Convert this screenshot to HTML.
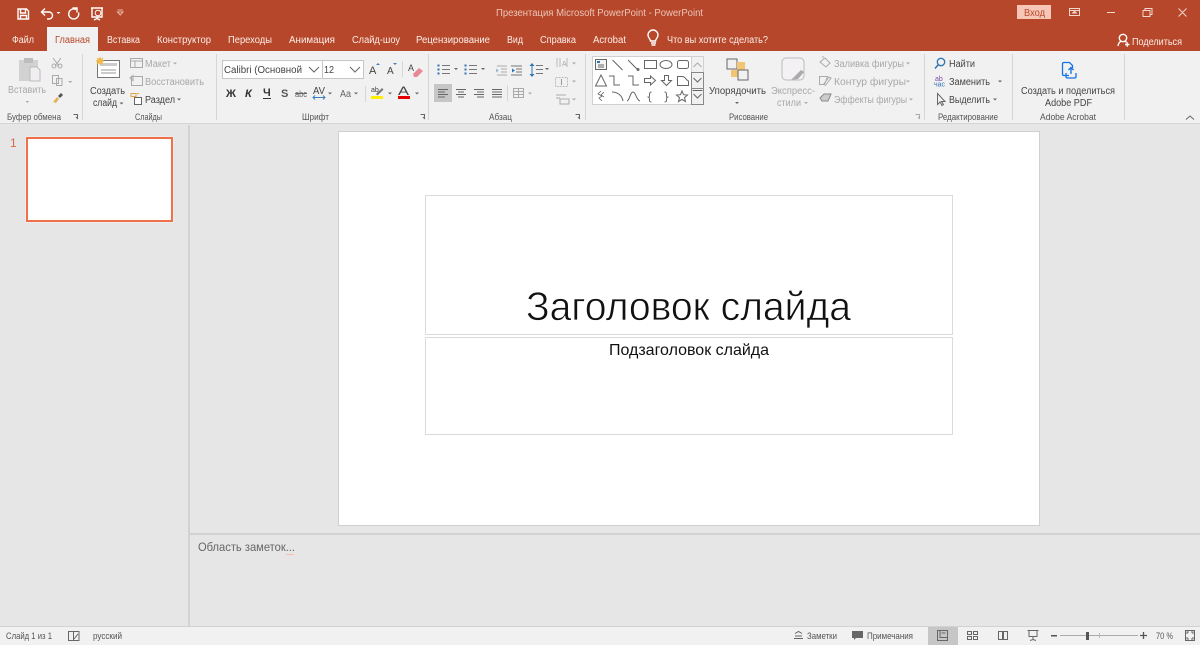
<!DOCTYPE html>
<html lang="ru">
<head>
<meta charset="utf-8">
<title>Презентация Microsoft PowerPoint - PowerPoint</title>
<style>
html,body{margin:0;padding:0;width:1200px;height:645px;overflow:hidden;background:#e6e6e6}
svg{display:block;filter:blur(.3px)}
text{font-family:"Liberation Sans",sans-serif;font-size:10px;fill:#444}
.t{fill:#fbeee9}
.d{fill:#a8a8a8}
.s{font-size:9.5px;fill:#555}
.g{fill:none;stroke:#666;stroke-width:1}
.gd{fill:none;stroke:#aaa;stroke-width:1}
.w{fill:none;stroke:#fff;stroke-width:1.4}
.a{fill:#666}
.ad{fill:#aaa}
</style>
</head>
<body>
<svg width="1200" height="645" viewBox="0 0 1200 645" xmlns="http://www.w3.org/2000/svg">
<rect width="1200" height="645" fill="#e6e6e6"/>
<!-- title bar -->
<rect width="1200" height="51" fill="#b7472a"/>
<rect x="47" y="27" width="51" height="25" fill="#f1f1f1"/>
<!-- QAT -->
<path class="w" d="M18 9h8.500l2 2v8h-10.500zM20.500 9v4h5V9M20.500 19v-3.500h6V19" stroke-width="1.300"/>
<path class="w" d="M42 12h7a3.500 3.500 0 0 1 0 7h-2M45 8.500l-3.500 3.500 3.500 3.500" stroke-width="1.700"/>
<path fill="#fff" d="M56.500 12h4l-2 2z"/>
<path class="w" d="M76 9.500a5 5 0 1 0 2.500 3M72.500 8h4.500v4.500" stroke-width="1.700"/>
<path class="w" d="M91 8h12M92 8v9h10V8M97 17v2M94 20l3-1.500 3 1.500" stroke-width="1"/>
<circle cx="98" cy="13" r="2.800" fill="none" stroke="#fff" stroke-width="1"/>
<path fill="none" stroke="#e7b9aa" d="M117.500 12h5.500l-2.700 3zM117.500 10h5.500"/>
<text x="496" y="16" textLength="207" lengthAdjust="spacingAndGlyphs" style="fill:#eac6ba">Презентация Microsoft PowerPoint  -  PowerPoint</text>
<rect x="1017" y="5" width="34" height="14" fill="#f6c7b6"/>
<text x="1024" y="16" textLength="21" lengthAdjust="spacingAndGlyphs" style="fill:#b7472a">Вход</text>
<path fill="none" stroke="#f3d6cc" d="M1069.500 8.500h10v7h-10zM1069.500 10.500h10"/>
<path fill="#f3d6cc" d="M1074.500 10.500l3 3h-6z"/>
<path stroke="#f3d6cc" d="M1107 12.500h8M1143 10.500h7v6h-7zM1145 10.500v-2h7v6h-2M1178.500 8.500l8 8M1186.500 8.500l-8 8" fill="none"/>
<!-- tabs -->
<text class="t" x="12" y="43" textLength="22" lengthAdjust="spacingAndGlyphs">Файл</text>
<text x="55" y="43" textLength="35" lengthAdjust="spacingAndGlyphs" style="fill:#b7472a">Главная</text>
<text class="t" x="107" y="43" textLength="33" lengthAdjust="spacingAndGlyphs">Вставка</text>
<text class="t" x="157" y="43" textLength="54" lengthAdjust="spacingAndGlyphs">Конструктор</text>
<text class="t" x="228" y="43" textLength="44" lengthAdjust="spacingAndGlyphs">Переходы</text>
<text class="t" x="289" y="43" textLength="46" lengthAdjust="spacingAndGlyphs">Анимация</text>
<text class="t" x="352" y="43" textLength="48" lengthAdjust="spacingAndGlyphs">Слайд-шоу</text>
<text class="t" x="416" y="43" textLength="74" lengthAdjust="spacingAndGlyphs">Рецензирование</text>
<text class="t" x="507" y="43" textLength="16" lengthAdjust="spacingAndGlyphs">Вид</text>
<text class="t" x="540" y="43" textLength="36" lengthAdjust="spacingAndGlyphs">Справка</text>
<text class="t" x="593" y="43" textLength="33" lengthAdjust="spacingAndGlyphs">Acrobat</text>
<path class="w" d="M651 43h5M651.500 45h4M650.500 41c0-2-2.500-3-2.500-6a5 5 0 0 1 10 0c0 3-2.500 4-2.500 6z" stroke-width="1"/>
<text class="t" x="667" y="43" textLength="101" lengthAdjust="spacingAndGlyphs">Что вы хотите сделать?</text>
<circle cx="1123" cy="38" r="3.700" class="w" stroke-width="1"/>
<path class="w" stroke-width="1" d="M1118 46c.5-3 2-4.500 3.500-5M1124.500 41c1 .3 1.800 1 2 1.500M1125 44.500h4.500M1127.200 42.200v4.500"/>
<text class="t" x="1132" y="45" textLength="50" lengthAdjust="spacingAndGlyphs">Поделиться</text>
<!-- ribbon -->
<rect y="51" width="1200" height="72" fill="#f1f1f1"/>
<rect y="123" width="1200" height="1" fill="#d4d4d4"/>
<g fill="#d6d6d6">
<rect x="82" y="54" width="1" height="66"/><rect x="216" y="54" width="1" height="66"/>
<rect x="428" y="54" width="1" height="66"/><rect x="585" y="54" width="1" height="66"/>
<rect x="924" y="54" width="1" height="66"/><rect x="1012" y="54" width="1" height="66"/>
<rect x="1124" y="54" width="1" height="66"/>
</g>
<!-- clipboard -->
<rect x="19" y="60" width="19" height="21" fill="#d2d2d2"/>
<rect x="24" y="58" width="9" height="5" fill="#bdbdbd"/>
<path d="M30 67h7l3 3v11H30z" fill="#f1eef2" stroke="#bbb"/>
<text class="d" x="8" y="93" textLength="38" lengthAdjust="spacingAndGlyphs">Вставить</text>
<path class="ad" d="M25.500 101h3.500l-1.700 2z"/>
<path class="gd" d="M53 58l6 8M61 58l-6 8"/><circle class="gd" cx="54" cy="66" r="2"/><circle class="gd" cx="60" cy="66" r="2"/>
<path class="gd" d="M52.500 75.500h6v8h-6zM56.500 78.500h5.500v7h-5.500z"/>
<path class="ad" d="M68 81h4.500l-2.200 2z"/>
<path d="M53 102l4-5 2 2-3 4z" fill="#e2b352"/><path d="M58 96l3-3 2 2-3 3z" fill="#555"/>
<!-- slides -->
<rect x="97.500" y="60.500" width="22" height="17" fill="#fff" stroke="#777"/>
<path stroke="#999" d="M101 70h15M101 73h15" fill="none"/>
<rect x="100" y="63" width="17" height="3" fill="#ccc"/>
<circle cx="100" cy="61" r="3" fill="#f2b84b"/><path stroke="#f2b84b" d="M96 61h8M100 57v8M97 58l6 6M103 58l-6 6"/>
<text x="90" y="94" textLength="35" lengthAdjust="spacingAndGlyphs">Создать</text>
<text x="93" y="106" textLength="24" lengthAdjust="spacingAndGlyphs">слайд</text>
<path class="a" d="M119.500 102.500h4l-2 2z"/>
<path class="gd" d="M130.500 58.500h12v9h-12zM130.500 61h12M135 61v6.500"/>
<text class="d" x="145" y="67" textLength="26" lengthAdjust="spacingAndGlyphs">Макет</text>
<path class="ad" d="M173 62.500h4l-2 2z"/>
<path class="gd" d="M131.500 76.500h11v9h-11zM130 78l3-2.500v5z"/>
<text class="d" x="145" y="85" textLength="59" lengthAdjust="spacingAndGlyphs">Восстановить</text>
<path d="M131 93.500h5v3h-5zM137 93.500h2" stroke="#e2a24a" fill="none"/><rect x="134.500" y="97.500" width="7" height="7" fill="#fff" stroke="#666"/>
<text x="145" y="103" textLength="30" lengthAdjust="spacingAndGlyphs">Раздел</text>
<path class="a" d="M177 98.500h4l-2 2z"/>
<!-- font -->
<rect x="222.500" y="60.500" width="100" height="18" fill="#fff" stroke="#c6c6c6"/>
<rect x="322.500" y="60.500" width="41" height="18" fill="#fff" stroke="#c6c6c6"/>
<text x="224" y="73" textLength="78" lengthAdjust="spacingAndGlyphs">Calibri (Основной</text>
<text x="324" y="73" textLength="10" lengthAdjust="spacingAndGlyphs">12</text>
<path class="g" d="M309 67l5 5 5-5M350 67l5 5 5-5"/>
<text x="369" y="74" style="font-size:11px">A</text><path fill="#3b7fc4" d="M376 65h4l-2-2z"/>
<text x="387" y="74" style="font-size:10px">A</text><path fill="#3b7fc4" d="M393 63h4l-2 2z"/>
<rect x="402" y="61" width="1" height="16" fill="#d6d6d6"/>
<text x="408" y="71" style="font-size:9px">A</text>
<path d="M413 74l6-6 4 3-6 6h-3z" fill="#e88a96"/>
<text x="226" y="97" style="font-size:11px;font-weight:bold;fill:#333">Ж</text>
<text x="245" y="97" style="font-size:11px;font-weight:bold;font-style:italic;fill:#333">К</text>
<text x="263" y="96" style="font-size:11px;font-weight:bold;fill:#333">Ч</text><rect x="263" y="98" width="8" height="1" fill="#333"/>
<text x="281" y="97" style="font-size:11px;font-weight:bold;fill:#555">S</text>
<text x="295" y="97" textLength="12" lengthAdjust="spacingAndGlyphs" style="font-size:9px;fill:#666">abc</text><rect x="295" y="93" width="12" height="1" fill="#666"/>
<text x="313" y="94" textLength="12" lengthAdjust="spacingAndGlyphs">AV</text>
<path stroke="#3b7fc4" fill="none" d="M313 97.500h12M315 95.500l-2 2 2 2M323 95.500l2 2-2 2"/>
<path class="a" d="M328 92.500h4l-2 2z"/>
<text x="340" y="97" textLength="11" lengthAdjust="spacingAndGlyphs" style="fill:#666">Aa</text>
<path class="a" d="M354 92.500h4l-2 2z"/>
<rect x="365" y="86" width="1" height="16" fill="#d6d6d6"/>
<text x="371" y="92" style="font-size:7px">ab</text>
<path d="M376 94l6-6 1.500 1.500-6 6z" fill="#777"/>
<rect x="371" y="96" width="12" height="3" fill="#ffef00"/>
<path class="a" d="M388 92.500h4l-2 2z"/>
<text x="398" y="95" textLength="11" lengthAdjust="spacingAndGlyphs" style="font-size:12px;fill:#444">A</text>
<rect x="398" y="96" width="12" height="3" fill="#e50000"/>
<path class="a" d="M415 92.500h4l-2 2z"/>
<path class="g" d="M420.500 114.500h4v4M423 117l2 2" stroke-width=".8"/>
<!-- paragraph -->
<g stroke="#777" fill="none">
<path d="M442 65.500h8M442 69.500h8M442 73.500h8M469 65.500h8M469 69.500h8M469 73.500h8"/>
<path d="M497 66h10M501 69h6M501 72h6M497 75h10" stroke="#aaa"/>
<path d="M511 66h11M516 69h6M516 72h6M511 75h11"/>
<path d="M536 65.500h7M536 69.500h7M536 73.500h7"/>
</g>
<g fill="#2e75b6">
<rect x="437.500" y="64.500" width="2" height="2"/><rect x="437.500" y="68.500" width="2" height="2"/><rect x="437.500" y="72.500" width="2" height="2"/>
<rect x="464.500" y="64.500" width="2" height="2"/><rect x="464.500" y="68.500" width="2" height="2"/><rect x="464.500" y="72.500" width="2" height="2"/>
<path d="M499 70.500l-3-2v4z" fill="#9fb8d4"/><path d="M515 70.500l-3-2v4z"/><path d="M532 63l2.500 3h-5zM532 77l2.500-3h-5z"/><rect x="531.500" y="65" width="1" height="10"/>
</g>
<path class="a" d="M454 68h4l-2 2zM481 68h4l-2 2zM545 68h4l-2 2z"/>
<g stroke="#bbb" fill="none"><path d="M557 58v9M560 58v9M567 58v9"/></g>
<text class="d" x="562" y="66" style="font-size:7px">A</text>
<path class="ad" d="M572 62.500h4l-2 2z"/>
<path stroke="#bbb" fill="none" stroke-dasharray="2 1" d="M555.500 77.500h12v9h-12z"/><path d="M561.500 79v6" stroke="#999"/>
<path class="ad" d="M572 80.500h4l-2 2z"/>
<path class="gd" d="M556 95h10M556 98h4M560 99h9v5h-9z"/>
<path class="ad" d="M572 98.500h4l-2 2z"/>
<rect x="434" y="84" width="18" height="18" fill="#c6c6c6"/>
<g stroke="#666" fill="none">
<path d="M438 89.500h10M438 92h7M438 94.500h10M438 97h7"/>
<path d="M456 89.500h10M458 92h6M456 94.500h10M458 97h6"/>
<path d="M474 89.500h10M477 92h7M474 94.500h10M477 97h7"/>
<path d="M492 89.500h10M492 92h10M492 94.500h10M492 97h10"/>
</g>
<rect x="507" y="85" width="1" height="16" fill="#d6d6d6"/>
<path class="gd" d="M513.500 88.500h5v9h-5zM518.500 88.500h5v9h-5zM513.500 91.500h10M513.500 94.500h10"/>
<path class="ad" d="M528 92.500h4l-2 2z"/>
<path class="g" stroke-width=".8" d="M575.500 114.500h4v4M578 117l2 2"/>
<!-- gallery -->
<rect x="592.500" y="56.500" width="111" height="48" fill="#fff" stroke="#d0d0d0"/>
<rect x="691.500" y="56.500" width="12" height="16" fill="#f1f1f1" stroke="#d0d0d0"/>
<rect x="691.500" y="72.500" width="12" height="16" fill="#f1f1f1" stroke="#888"/>
<rect x="691.500" y="88.500" width="12" height="16" fill="#f1f1f1" stroke="#888"/>
<path class="gd" d="M693.500 67l4-4 4 4"/>
<path class="g" d="M693.500 78l4 4 4-4M693.500 94l4 4 4-4M692.500 90.500h10"/>
<g class="g" stroke-width=".9" style="fill:none;stroke:#666">
<rect x="595.500" y="59.500" width="11" height="10" fill="#f4f4f4"/><path d="M598 65h6M598 67h6"/><path d="M597 62h3" stroke="#2e75b6" stroke-width="2"/>
<path d="M612.500 60l10 10M628 60l10 10"/><circle cx="638" cy="69.500" r="1" fill="#666"/>
<rect x="644.500" y="60.500" width="12" height="8"/><ellipse cx="666" cy="64.500" rx="6" ry="4"/><rect x="677.500" y="60.500" width="11" height="8" rx="2"/>
<path d="M601 75l-5.500 11h11zM609 76h5v9h6M628 76h5v9h6"/>
<path d="M644.500 78.500h6v-2.500l5 4.500-5 4.500v-2.500h-6zM664.500 75.500h4v5h3l-5 5-5-5h3zM677.500 85.500v-9h5c3 0 3 3.500 6 4.500v4.500z"/>
<path d="M601 91l-3 3 4 2-3 2 3 3M604 92l-3 3 3 2" stroke-width=".8"/>
<path d="M612 92c5 0 10 3 11 9M627 101c3-1 3-9 6-9s3 8 7 9"/>
<path d="M651.500 92c-2 0-2 1-2 3.500s-.5 1.500-2 1.500c1.500 0 2 .5 2 2.500s0 2.500 2 2.500M664.500 92c2 0 2 1 2 3.500s.5 1.500 2 1.500c-1.500 0-2 .5-2 2.500s0 2.500-2 2.500"/>
<path d="M682 91l1.500 3.700 4 .3-3 2.600 1 4-3.500-2.200-3.500 2.200 1-4-3-2.600 4-.3z"/>
</g>
<!-- arrange -->
<rect x="727" y="59" width="10" height="10" fill="#f1f1f1" stroke="#666"/>
<rect x="737" y="62" width="8" height="8" fill="#f2c574"/><rect x="731" y="70" width="7" height="7" fill="#f2c574"/>
<rect x="738" y="70" width="10" height="10" fill="#f1f1f1" stroke="#666"/>
<text x="709" y="94" textLength="57" lengthAdjust="spacingAndGlyphs">Упорядочить</text>
<path class="a" d="M735 102h4l-2 2z"/>
<rect x="782" y="58" width="22" height="22" rx="4" fill="#f3f1f4" stroke="#bbb"/>
<path d="M791 80l5-5 5-5 3 2-6 7z" fill="#aaa"/>
<text class="d" x="771" y="94" textLength="44" lengthAdjust="spacingAndGlyphs">Экспресс-</text>
<text class="d" x="777" y="106" textLength="24" lengthAdjust="spacingAndGlyphs">стили</text>
<path class="ad" d="M804 102h4l-2 2z"/>
<path class="gd" d="M820 62l5-4 5 5-4 4zM823 58v-2"/>
<text class="d" x="834" y="67" textLength="70" lengthAdjust="spacingAndGlyphs">Заливка фигуры</text>
<path class="ad" d="M906 62.500h4l-2 2z"/>
<path class="gd" d="M819.500 76.500h8l-3 8h-5zM823 85l6-8 2 1-6 8"/>
<text class="d" x="834" y="85" textLength="72" lengthAdjust="spacingAndGlyphs">Контур фигуры</text>
<path class="ad" d="M906 80.500h4l-2 2z"/>
<path d="M820 98l4-4h7l-3 7h-6z" fill="#ccc" stroke="#888"/>
<text class="d" x="834" y="103" textLength="73" lengthAdjust="spacingAndGlyphs">Эффекты фигуры</text>
<path class="ad" d="M909 98.500h4l-2 2z"/>
<path class="gd" d="M915.500 114.500h4v4M918 117l2 2" stroke-width=".8"/>
<!-- edit -->
<circle cx="941" cy="62" r="3.700" fill="none" stroke="#2e75b6" stroke-width="1.300"/><path stroke="#2e75b6" stroke-width="1.500" d="M938 65l-3 3.500"/>
<text x="949" y="67" textLength="26" lengthAdjust="spacingAndGlyphs">Найти</text>
<text x="935" y="81" style="font-size:7px;fill:#7d4ea0">ab</text>
<text x="934" y="86.500" style="font-size:7px;fill:#2e75b6">час</text>
<text x="949" y="85" textLength="41" lengthAdjust="spacingAndGlyphs">Заменить</text>
<path class="a" d="M998 80.500h4l-2 2z"/>
<path class="g" d="M937.500 93.500v11l2.500-2.500 2 3.500 1.500-1-2-3h3.500z"/>
<text x="949" y="103" textLength="41" lengthAdjust="spacingAndGlyphs">Выделить</text>
<path class="a" d="M993 98.500h4l-2 2z"/>
<!-- acrobat -->
<path fill="none" stroke="#1473e6" stroke-width="1.300" d="M1069 75.500h-5c-1 0-1.500-.5-1.500-1.500V64c0-1 .5-1.500 1.500-1.500h5.500l3 3V68M1066 73v3.500c0 1 .5 1.500 1.500 1.500h7c1 0 1.500-.5 1.500-1.500V73M1071 74v-6M1068.500 70l2.500-2.500 2.500 2.500"/>
<text x="1021" y="94" textLength="94" lengthAdjust="spacingAndGlyphs">Создать и поделиться</text>
<text x="1045" y="106" textLength="47" lengthAdjust="spacingAndGlyphs">Adobe PDF</text>
<path class="g" d="M1186 119.500l4-3.500 4 3.500"/>
<!-- group labels -->
<text class="s" x="7" y="120" textLength="54" lengthAdjust="spacingAndGlyphs">Буфер обмена</text>
<path class="g" stroke-width=".8" d="M73.500 114.500h4v4M76 117l2 2"/>
<text class="s" x="135" y="120" textLength="27" lengthAdjust="spacingAndGlyphs">Слайды</text>
<text class="s" x="302" y="120" textLength="27" lengthAdjust="spacingAndGlyphs">Шрифт</text>
<text class="s" x="489" y="120" textLength="23" lengthAdjust="spacingAndGlyphs">Абзац</text>
<text class="s" x="729" y="120" textLength="39" lengthAdjust="spacingAndGlyphs">Рисование</text>
<text class="s" x="938" y="120" textLength="60" lengthAdjust="spacingAndGlyphs">Редактирование</text>
<text class="s" x="1040" y="120" textLength="56" lengthAdjust="spacingAndGlyphs">Adobe Acrobat</text>
<!-- panes -->
<rect x="188" y="125" width="2" height="501" fill="#d2d2d2"/>
<rect x="190" y="533" width="1010" height="2" fill="#d2d2d2"/>
<text x="10" y="147" style="font-size:12px;fill:#d9694a">1</text>
<rect x="26" y="137" width="147" height="85" fill="#fff" stroke="#f4f4f4" stroke-width="1"/>
<rect x="27" y="138" width="145" height="83" fill="#fff" stroke="#f0704a" stroke-width="2"/>
<!-- slide -->
<rect x="338.500" y="131.500" width="701" height="394" fill="#fff" stroke="#d0d0d0"/>
<g fill="none" stroke="#b4b4b4" stroke-dasharray="1 1">
<rect x="425.500" y="195.500" width="527" height="139"/>
<rect x="425.500" y="337.500" width="527" height="97"/>
</g>
<text x="526" y="320" textLength="325" lengthAdjust="spacingAndGlyphs" style="font-size:40px;fill:#111;stroke:#fff;stroke-width:.7px">Заголовок слайда</text>
<text x="609" y="355" textLength="160" lengthAdjust="spacingAndGlyphs" style="font-size:16px;fill:#111">Подзаголовок слайда</text>
<!-- notes -->
<text x="198" y="551" textLength="97" lengthAdjust="spacingAndGlyphs" style="font-size:12px;fill:#666">Область заметок...</text>
<rect x="286" y="554" width="8" height="1" fill="#f5bfa8"/>
<!-- status bar -->
<rect y="626" width="1200" height="1" fill="#d2d2d2"/>
<rect y="627" width="1200" height="18" fill="#f1f1f1"/>
<text x="6" y="639" textLength="46" lengthAdjust="spacingAndGlyphs" style="font-size:9.500px;fill:#555">Слайд 1 из 1</text>
<path class="g" d="M68.500 631.500h5v9h-5zM73.500 631.500h5.500v9h-5.500zM74 639l4-5" stroke-width=".8"/>
<text x="93" y="639" textLength="29" lengthAdjust="spacingAndGlyphs" style="font-size:9.500px;fill:#555">русский</text>
<path class="g" d="M794 638.500h9M795 636h7M795 633.500l3.500-2 3.500 2" stroke-width=".9"/>
<text x="807" y="639" textLength="30" lengthAdjust="spacingAndGlyphs" style="font-size:9.500px;fill:#555">Заметки</text>
<path d="M852 631h11v7h-7l-2 2v-2h-2z" fill="#666"/>
<text x="867" y="639" textLength="46" lengthAdjust="spacingAndGlyphs" style="font-size:9.500px;fill:#555">Примечания</text>
<rect x="928" y="627" width="30" height="18" fill="#c6c6c6"/>
<path class="g" d="M937.500 630.500h10v10h-10zM940 630.500v7h7.500M941.500 633h4" stroke-width=".9"/>
<path class="g" d="M967.500 631.500h4v3h-4zM973.500 631.500h4v3h-4zM967.500 636.500h4v3h-4zM973.500 636.500h4v3h-4z" stroke-width=".9"/>
<path class="g" d="M998.500 631.500h4v8h-4zM1003.500 631.500h4v8h-4z" stroke-width=".9"/>
<path class="g" d="M1027.500 630.500h11M1029 630.500v6h8v-6M1033 636.500v3M1030 640.500l3-1 3 1" stroke-width=".9"/>
<rect x="1051" y="635" width="6" height="1.500" fill="#555"/>
<rect x="1060" y="635" width="78" height="1" fill="#aaa"/>
<rect x="1099" y="633" width="1" height="5" fill="#bbb"/>
<rect x="1086" y="632" width="3" height="8" fill="#555"/>
<path stroke="#555" stroke-width="1.300" d="M1140 635.500h7M1143.500 632v7"/>
<text x="1156" y="639" textLength="17" lengthAdjust="spacingAndGlyphs" style="font-size:9.500px;fill:#555">70 %</text>
<path class="g" d="M1185.500 630.500h9v10h-9zM1187 634v-2h2M1193 634v-2h-2M1187 637v2h2M1193 637v2h-2" stroke-width=".8"/>
</svg>
</body>
</html>
